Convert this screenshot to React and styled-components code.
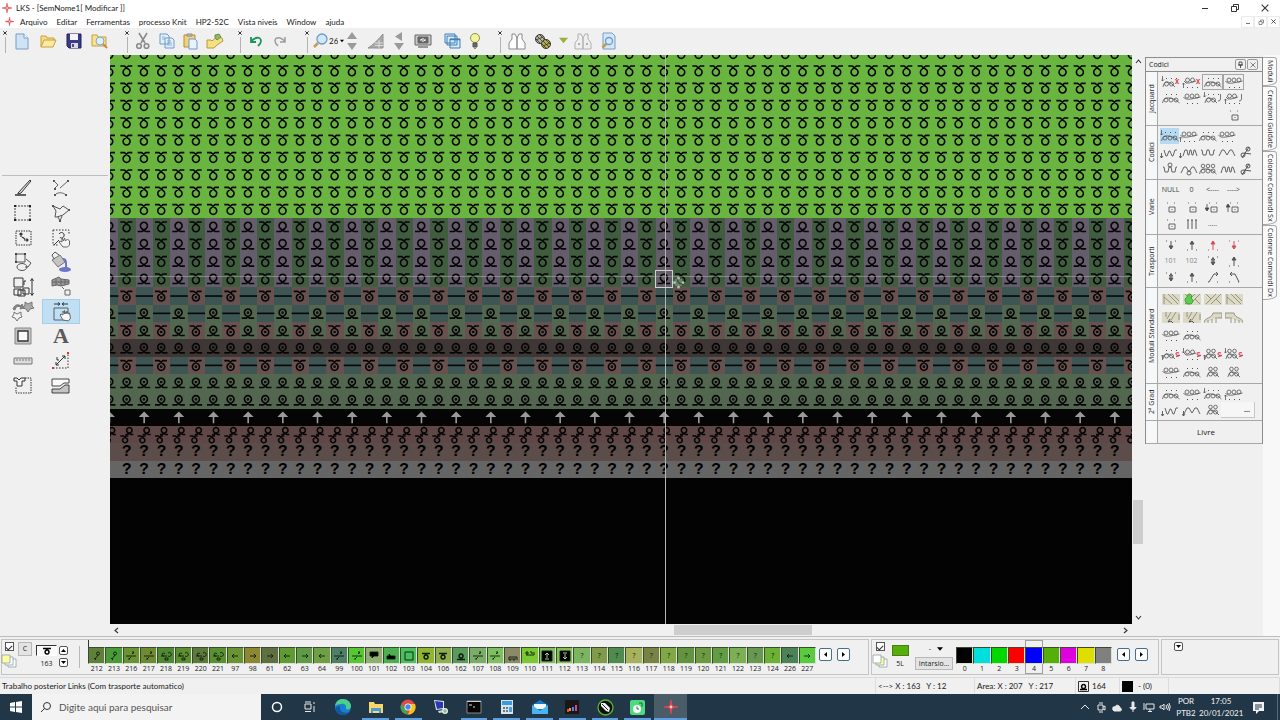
import styled, { createGlobalStyle } from 'styled-components';
import { useState } from 'react';

const GlobalStyle = createGlobalStyle`
  * { box-sizing: border-box; }
  body {
    margin: 0;
    background: #f0f0f0;
    color: #1a1a1a;
    font-family: Lato, "Open Sans", sans-serif;
    font-size: 8px;
    line-height: 10px;
  }
  button, input, select {
    font: inherit;
    color: inherit;
    margin: 0;
    padding: 0;
    border: 0;
    background: none;
  }
  svg { display: block; flex: none; }
`;

const Window = styled.div`
  min-height: 100vh;
  display: flex;
  flex-direction: column;
`;

/* ---------- title, menu, toolbar ---------- */

const TitleBar = styled.header`
  height: 15px;
  display: flex;
  align-items: center;
  gap: 4px;
  padding-left: 2px;
  background: white;
`;

const Title = styled.span`
  flex: 1;
`;

const WindowButtons = styled.div`
  display: flex;
  & button {
    width: 30px;
    height: 15px;
    display: grid;
    place-items: center;
  }
`;

const MenuBar = styled.nav`
  height: 13px;
  display: flex;
  align-items: center;
  background: white;
  padding-left: 5px;
  & > svg { margin-right: 6px; }
`;

const MenuItem = styled.a`
  color: inherit;
  text-decoration: none;
  margin-right: 9px;
`;

const ChildButtons = styled.div`
  display: flex;
  margin-left: auto;
  & button {
    width: 13px;
    height: 12px;
    border: 1px solid #ececec;
    display: grid;
    place-items: center;
  }
`;

const ToolBar = styled.div`
  height: 27px;
  display: flex;
  padding: 0 0 2px 1px;
`;

const ToolGroup = styled.div`
  width: ${({ $w }) => $w}px;
  display: flex;
  align-items: center;
`;

const Handle = styled.div`
  align-self: flex-end;
  width: 8px;
  height: 22px;
  display: flex;
  flex-direction: column;
  align-items: center;
  gap: 2px;
  &::after {
    content: '';
    flex: 1;
    width: 1px;
    background: #b4b4b4;
  }
`;

const ToolButton = styled.button`
  width: ${({ $w }) => $w}px;
  height: 24px;
  display: grid;
  place-items: center;
`;

const Picker = styled.label`
  display: flex;
  align-items: center;
  gap: 2px;
  & select {
    appearance: none;
    width: 9px;
    text-align: center;
  }
`;

/* ---------- workspace ---------- */

const Workspace = styled.main`
  flex: 1;
  display: grid;
  grid-template-columns: 110px minmax(0, 1fr) 119px 17px;
`;

const SideBar = styled.aside`
  padding: 120px 2px 0;
`;

const ToolPalette = styled.div`
  height: 223px;
  border-top: 1px solid #bdbdbd;
  padding-left: 2px;
  display: grid;
  grid-template-columns: 38px 38px;
  grid-template-rows: repeat(9, 1fr);
`;

const PaletteTool = styled.button`
  display: grid;
  place-items: center;
  background: ${({ $active }) => ($active ? '#c0dff2' : 'none')};
  ${({ $active }) => $active && 'border: 1px solid #a3cfea;'}
`;

const DrawingArea = styled.section`
  display: grid;
  grid-template-columns: minmax(0, 1fr) 12px;
  grid-template-rows: minmax(0, 1fr) 12px;
`;

const Chart = styled.svg`
  width: 100%;
  height: 100%;
  background: #030303;
`;

const ChartText = styled.g`
  font-family: "Liberation Mono", monospace;
  font-size: 16px;
  font-weight: bold;
  text-anchor: middle;
`;

const ScrollBar = styled.div`
  display: flex;
  flex-direction: ${({ $vertical }) => ($vertical ? 'column' : 'row')};
  align-items: center;
  justify-content: space-between;
  padding: ${({ $vertical }) => ($vertical ? '3px 0' : '0 3px')};
`;

const ScrollTrack = styled.div`
  flex: 1;
  align-self: stretch;
  display: grid;
  grid-template: ${({ $vertical }) =>
    $vertical ? '792fr 81fr 127fr / 1fr' : '1fr / 552fr 138fr 309fr'};
  &::after {
    content: '';
    background: #cdcdcd;
    ${({ $vertical }) => ($vertical ? 'grid-row: 2; margin: 0 1px;' : 'grid-column: 2; margin: 1px 0;')}
  }
`;

/* ---------- code panel on the right ---------- */

const Panel = styled.aside`
  align-self: start;
  margin: 2px 0 0 1px;
  border: 1px solid #8c8c8c;
  border-width: 1px 1px 0;
  font-family: "Open Sans", "Noto Sans", sans-serif;
  font-size: 7px;
`;

const PanelTitle = styled.div`
  height: 14px;
  display: flex;
  align-items: center;
  gap: 1px;
  padding: 0 4px 0 3px;
  border-bottom: 1px solid #8c8c8c;
  & span { flex: 1; }
  & button {
    width: 11px;
    height: 11px;
    border: 1px solid #9a9a9a;
    border-radius: 2px;
    display: grid;
    place-items: center;
  }
`;

const Section = styled.section`
  display: grid;
  grid-template-columns: 12px 1fr;
  height: ${({ $h }) => $h}px;
  border-bottom: 1px solid #a8a8a8;
`;

const SectionLabel = styled.h2`
  margin: 0;
  font-size: 7px;
  line-height: 11px;
  font-weight: normal;
  writing-mode: vertical-rl;
  transform: rotate(180deg);
  text-align: center;
  white-space: nowrap;
  border-left: 1px solid #a8a8a8;
  background: #f5f7f9;
`;

const CodeGrid = styled.div`
  display: grid;
  grid-template-columns: repeat(${({ $cols }) => $cols}, ${({ $cols }) => ($cols === 5 ? 19 : 21)}px);
  grid-auto-rows: 1fr;
  padding: 2px;
`;

const Code = styled.button`
  display: grid;
  place-items: center;
  color: ${({ $dim }) => ($dim ? '#8a8a8a' : '#444')};
  white-space: nowrap;
  overflow: hidden;
  background: ${({ $active }) => ($active ? '#b5daf2' : 'none')};
  ${({ $framed }) => $framed && 'border: 1px solid #a5a5a5;'}
`;

const MoreButton = styled.button`
  margin-left: -2px;
  width: 34px;
  border: 1px solid #c6c6c6;
  border-width: 0 1px 1px 0;
  background: #f6f6f6;
  text-align: right;
  padding-right: 4px;
  font-weight: bold;
`;

const Free = styled.button`
  font-size: 8px;
  padding-right: 8px;
`;

const Tabs = styled.div`
  display: flex;
  flex-direction: column;
  padding-top: 2px;
  background: #f8f8f8;
  font-family: "Open Sans", "Noto Sans", sans-serif;
  font-size: 7px;
`;

const Tab = styled.button`
  width: 14px;
  height: ${({ $h }) => $h}px;
  writing-mode: vertical-rl;
  line-height: 12px;
  white-space: nowrap;
  background: #fbfbfb;
  border: 1px solid #a8a8a8;
  border-left: 0;
  border-radius: 0 3px 12px 0 / 0 3px 5px 0;
`;

/* ---------- bottom bars ---------- */

const BottomBar = styled.div`
  height: 41px;
  display: flex;
  gap: 2px;
  padding: 2px 1px;
  border-top: 1px solid #bcbcbc;
  font-family: "Open Sans", "Noto Sans", sans-serif;
  font-size: 7px;
`;

const Box = styled.div`
  flex: ${({ $w }) => ($w ? `0 0 ${$w}px` : 1)};
  display: flex;
  gap: ${({ $gap }) => $gap || 0}px;
  padding-left: 2px;
  border: 1px solid #c4c4c4;
`;

const Column = styled.div`
  width: ${({ $w }) => $w}px;
  display: flex;
  flex-direction: column;
  align-items: center;
  gap: 3px;
  padding-top: ${({ $top }) => $top || 2}px;
`;

const Check = styled.input`
  appearance: none;
  width: 9px;
  height: 9px;
  border: 1px solid #555;
  background: white;
  display: grid;
  place-items: center;
  &:checked::after {
    content: '';
    width: 5px;
    height: 3px;
    border: solid #333;
    border-width: 0 0 1px 1px;
    transform: rotate(-45deg);
  }
`;

const FlatButton = styled.button`
  min-width: 14px;
  height: ${({ $h }) => $h}px;
  padding: 0 3px;
  border: 1px solid #b8b8b8;
  background: #e3e3e3;
  white-space: nowrap;
`;

const CurrentCode = styled.div`
  width: 21px;
  height: 11px;
  border: 1px solid #888;
  border-color: #333 white white #333;
  background: #fafafa;
  display: grid;
  place-items: center;
`;

const CurrentColor = styled.div`
  width: 17px;
  height: 11px;
  border: 1px solid #4a7a20;
  background: #55ae0a;
`;

const ArrowButton = styled.button`
  width: ${({ $s }) => $s}px;
  height: ${({ $s }) => $s}px;
  border: 1px solid ${({ $s }) => ($s > 10 ? '#47708c' : '#555')};
  border-radius: 2px;
  background: white;
  display: grid;
  place-items: center;
`;

const Arrows = styled.div`
  display: flex;
  gap: 5px;
  padding: 8px 0 0 3px;
`;

const Separator = styled.div`
  width: 1px;
  margin: 6px 8px 6px 9px;
  background: #b8b8b8;
`;

const SwatchRow = styled.div`
  width: ${({ $w }) => $w}px;
  display: grid;
  grid-template-columns: repeat(${({ $n }) => $n}, 1fr);
  ${({ $tick }) => $tick && `
    background: linear-gradient(#333, #333) 0 0 / 1px 8px no-repeat;
  `}
`;

const Swatch = styled.button`
  display: flex;
  flex-direction: column;
  align-items: center;
  padding-top: 7px;
  line-height: 9px;
  height: 34px;
  ${({ $active }) => $active && 'box-shadow: inset 0 0 0 1px #a0a0a0;'}
`;

const SwatchColor = styled.span`
  width: 100%;
  height: 17px;
  border: 1px solid;
  border-color: #3a4a30 #d9e3d0 #d9e3d0 #3a4a30;
  background: ${({ $color }) => $color};
  color: #101810;
  display: grid;
  place-items: center;
`;

const StatusBar = styled.footer`
  height: 17px;
  display: flex;
  border-top: 1px solid #dadada;
`;

const StatusField = styled.div`
  ${({ $w }) => ($w ? `width: ${$w}px;` : 'flex: 1;')}
  display: flex;
  align-items: center;
  gap: 3px;
  padding-left: 2px;
  border-right: 1px solid #dcdcdc;
  white-space: pre;
`;

const BlackSquare = styled.span`
  width: 11px;
  height: 11px;
  background: #000;
`;

const TaskBar = styled.div`
  height: 26px;
  display: flex;
  background: #213646;
  color: #f2f2f2;
`;

const StartButton = styled.button`
  width: 32px;
  display: grid;
  place-items: center;
`;

const Search = styled.label`
  width: 229px;
  display: flex;
  align-items: center;
  gap: 7px;
  padding-left: 8px;
  background: #f3f3f3;
  color: #333;
  font-size: 10px;
  & input {
    flex: 1;
    min-width: 0;
    outline: none;
  }
  & input::placeholder { color: #555; }
`;

const Apps = styled.div`
  width: 426px;
  display: grid;
  grid-template-columns: repeat(13, 1fr);
`;

const AppButton = styled.button`
  display: grid;
  place-items: center;
  background: ${({ $active }) => ($active ? '#4b5c69' : 'none')};
  ${({ $open, $active }) => $open && `
    box-shadow: inset 0 -2px #5f9fe0;
    margin: 0 ${$active ? 0 : 3}px;
  `}
`;

const Tray = styled.div`
  margin-left: auto;
  display: flex;
  align-items: center;
`;

const TrayButton = styled.button`
  width: ${({ $w }) => $w || 16}px;
  display: grid;
  place-items: center;
`;

const TrayText = styled.div`
  width: ${({ $w }) => $w}px;
  text-align: center;
  line-height: 12px;
`;

const ShowDesktop = styled.div`
  width: 3px;
  align-self: stretch;
  margin-left: 4px;
  border-left: 1px solid #5a6974;
`;

/* ---------- icons ---------- */

function Icon({ s = 20, h, box, children, ...rest }) {
  const height = h || s;
  return (
    <svg width={s} height={height} viewBox={box || `0 0 ${s} ${height}`} fill="none" stroke="#333" aria-hidden="true" {...rest}>
      {children}
    </svg>
  );
}

const Star = ({ s = 10, color = '#d84a4a' }) => (
  <Icon s={s} box="0 0 10 10" stroke="none" fill={color}>
    <path d="M5 0 5.8 4.2 10 5 5.8 5.8 5 10 4.2 5.8 0 5 4.2 4.2Z" stroke={color} strokeWidth=".5" />
    <circle cx="5" cy="5" r="1" fill="#f6c9c9" />
  </Icon>
);

const Triangle = ({ dir = 'down', s = 5, color = '#000' }) => {
  const d = { down: 'M0 1h5L2.5 4z', up: 'M0 4h5L2.5 1z', left: 'M4 0v5L1 2.5z', right: 'M1 0v5L4 2.5z' };
  return <Icon s={s} box="0 0 5 5" stroke="none" fill={color}><path d={d[dir]} /></Icon>;
};

const Chevron = ({ dir }) => {
  const d = { up: 'M1 5l2.5-3 2.5 3', down: 'M1 2l2.5 3 2.5-3', left: 'M5 1L2 3.5l3 2.5', right: 'M2 1l3 2.5L2 6' };
  return <Icon s={7} strokeWidth="1.1"><path d={d[dir]} /></Icon>;
};

const Vest = ({ dots, color }) => (
  <Icon s={18} stroke={color} fill={dots ? '#efefef' : '#fdfdfd'}>
    <path d="M4 2h3l2 4v11H1v-6l3-4zM14 2h-3L9 6v11h8v-6l-3-4z" />
    {dots && <path d="M4 12h2M12 12h2" strokeWidth="2" />}
  </Icon>
);

const Lens = ({ x = 8, y = 7, r = 4 }) => (
  <>
    <path d={`M${x - r + 1} ${y + r - 1}l-4 4`} stroke="#c79a52" strokeWidth="2.5" />
    <circle cx={x} cy={y} r={r} fill="#cfe9fb" stroke="#6d9cc4" strokeWidth="1.3" />
  </>
);

const icons = {
  new: <Icon s={18} stroke="#7d9cc0"><path d="M3 2h8l4 4v11H3z" fill="#cfe3f7" /><path d="M11 2v4h4" fill="#fff" /></Icon>,
  open: <Icon s={18} stroke="#c8a03c"><path d="M2 15V4h5l1 2h7v3" fill="#f5dc85" /><path d="M2 15l3-7h12l-3 7z" fill="#fbeaa0" /></Icon>,
  save: <Icon s={18} stroke="#20205a"><path d="M2 2h14v14H4l-2-2z" fill="#3a3a86" /><path d="M5 2h8v6H5z" fill="#f4f4fa" stroke="none" /><path d="M6 11h7v5H6z" fill="#d8d8e6" stroke="none" /><path d="M8 12v3" strokeWidth="1.5" /></Icon>,
  find: <Icon s={18} stroke="#c8a03c"><path d="M1 14V3h5l1 2h8v9z" fill="#f8e290" /><circle cx="9" cy="9" r="4" fill="#dcf0fb" stroke="#86a8c0" /><path d="M12 12l4 4" stroke="#c78a42" strokeWidth="2" /></Icon>,
  cut: <Icon s={18} stroke="#8a8a8a" strokeWidth="1.6"><path d="M5 1l6 10M13 1L7 11" /><circle cx="5" cy="14" r="2.3" /><circle cx="12.5" cy="14" r="2.3" /></Icon>,
  copy: <Icon s={18} stroke="#6f9bc8" fill="#e2effb"><path d="M2 2h7l2 2v8H2zM7 6h7l2 2v8H7z" /><path d="M9 9h4M9 11h5M9 13h5M4 5h3M4 7h3" strokeWidth=".7" /></Icon>,
  paste: <Icon s={18} stroke="#b08f3c"><path d="M2 3h11v12H2z" fill="#efd27a" /><path d="M5 2h5v2H5z" fill="#ccc" stroke="#888" /><path d="M7 7h6l2 2v8H7z" fill="#e8f2fc" stroke="#6f9bc8" /></Icon>,
  brush: <Icon s={18} stroke="#b99a35"><path d="M1 16V8h4l1 1 5-4 5 1 1 3-6 4-3 3z" fill="#f3df86" /><path d="M9 3l4-1 2 3-4 3-2-2z" fill="#8fb86a" stroke="#6b8f4a" /></Icon>,
  undo: <Icon s={16} stroke="#1f9462" strokeWidth="1.8"><path d="M3 4v5h5M3 9C6 4 13 3 13 8c0 2-2 4-3 5" /></Icon>,
  redo: <Icon s={16} stroke="#9c9c9c" strokeWidth="1.5"><path d="M13 4v5H8M13 9C10 4 3 3 3 8c0 2 2 4 3 5" /></Icon>,
  zoom: <Icon s={18}><Lens x={11} y={7} r={5} /></Icon>,
  updown: <Icon s={14} h={20} stroke="none" fill="#9a9a9a"><path d="M7 1l5 7H2zM7 19l5-7H2z" /></Icon>,
  slope: <Icon s={18} stroke="#8f8f8f"><path d="M1 16C6 13 11 8 16 2v14z" fill="#a9a9a9" /><path d="M12 8v8M8 11h8M8 13.5h8" stroke="#eee" strokeWidth=".7" /></Icon>,
  steps: <Icon s={14} h={20} stroke="none" fill="#9a9a9a"><path d="M10 1v9L3 5.500zM7 19l5-7H2z" /></Icon>,
  monitor: <Icon s={18} stroke="#666"><path d="M1 3h16v10H1z" fill="#c8c8c8" /><path d="M4 5h10v6H4z" fill="#666" /><path d="M6 8h2l-1-1M12 8h-2l1 1M9 6v4" stroke="#fff" /><path d="M4 15h10" strokeWidth="2" stroke="#999" /></Icon>,
  windows: <Icon s={18} stroke="#3f7fb5" fill="#d8ebfa"><path d="M1 2h10v9H1zM3 4h10v9H3zM6 7h10v9H6z" /><path d="M6 7.5h10" strokeWidth="1.5" /></Icon>,
  bulb: <Icon s={18} stroke="#8f8f50"><circle cx="9" cy="6" r="4.500" fill="#f3f59a" /><path d="M7 11h4v4H7z" fill="#666" stroke="#555" /><path d="M8 16.5h2" /></Icon>,
  yarn: <Icon s={18} stroke="#333"><circle cx="6" cy="7" r="4.5" fill="#b8b8a0" /><circle cx="12" cy="12" r="4.5" fill="#b6b04a" /><path d="M3 4l6 6M2 7l4 4M6 3l4 4M9 9l6 6M8 12l4 4M12 8l4 4M2 8l7-3M9 14l7-3" strokeWidth=".8" /></Icon>,
  preview: <Icon s={18} stroke="#7d9cc0"><path d="M3 1h9l3 3v13H3z" fill="#d4e6f8" /><Lens x={9} y={9} r={3.5} /></Icon>,

  pencil: <Icon><path d="M2 17h11" strokeWidth="1.5" /><path d="M5 15L17 2l1 1L8 15l-3 1z" fill="#ddd" /></Icon>,
  lines: <Icon stroke="#666"><path d="M3 3l4 4-4 4M9 10l8-7M4 17c2-3 8-3 11 0" /><path d="M2 2h2v2H2zM16 2h2v2h-2zM3 10h2v2H3zM3 16h2v2H3zM14 16h2v2h-2z" fill="#555" stroke="none" /></Icon>,
  select: <Icon><path d="M2 3h15v14H2z" strokeDasharray="2 1" stroke="#444" /><path d="M1 2h2v2H1zM16 2h2v2h-2zM1 16h2v2H1zM16 16h2v2h-2z" fill="#222" stroke="none" /></Icon>,
  lasso: <Icon stroke="#555"><path d="M2 3l7 3 3-3 6 4-6 5-6 2H4l1-6zM7 14l2 4 2-5" /><path d="M1 2h2v2H1zM17 6h2v2h-2zM8 17h2v2H8z" fill="#555" stroke="none" /></Icon>,
  moveBox: <Icon><path d="M3 3h15v14H3z" strokeDasharray="1.5 1" /><path d="M8 9V5M6.500 6.500L8 5l1.500 1.500M11 12h4M13.500 10.500L15 12l-1.500 1.500M9 9l3 2" strokeWidth="1.2" /></Icon>,
  rotate: <Icon><path d="M2 2h16v5M2 2v14M2 17h6" strokeDasharray="1.5 1.5" /><path d="M8 6c2-3 6-1 5 2s-4 2-4 1M3 17l5-5" /><path d="M12 19l-4-5 1-1 2 1v-4l1.500 3 1-3 1 3 2-2 2 2v4l-2 2z" fill="#f4f4f4" stroke="#666" /></Icon>,
  shapes: <Icon stroke="#555"><path d="M3 2h9v8H3z" /><ellipse cx="9" cy="15" rx="5" ry="3.5" fill="#f0f0f0" /><path d="M13 7l5 4-3 4h-3" /><path d="M2 1h2v2H2zM11 1h2v2h-2zM2 9h2v2H2z" fill="#444" stroke="none" /></Icon>,
  bucket: <Icon s={22}><path d="M2 9l8-5 5 7-7 5z" fill="#c4c4c4" stroke="#777" /><path d="M4 8L2 4l3-3 4 3" stroke="#555" /><path d="M13 8c4 0 3 6 3 9h2" fill="none" stroke="#6a72c4" strokeWidth="2" /><ellipse cx="15" cy="18.5" rx="6" ry="2.5" fill="#6e76c8" stroke="none" /></Icon>,
  arrange: <Icon s={22}><path d="M2 2h9v9H2zM2 13h7v6H2zM6 14h7v6H6zM11 12h6v6h-6zM12 9V5h2" /><path d="M20 3v16M18.5 5L20 2.500 21.5 5M18.5 17l1.500 2.5 1.500-2.5" /></Icon>,
  blocks: <Icon s={22} stroke="#666"><path d="M2 4l7-3 2 2 8 1v4l-8 2-4-1-5 1z" fill="#999" /><path d="M6 3v6M11 3v7M15 4v5M2 6h17" /><path d="M15 14h5v5h-5zM12 11l2 2" /></Icon>,
  stars: <Icon s={24} stroke="#777"><path d="M14 2l3 2 4-2v4l2 2-4 1-2 3-2-3-3-1 2-3z" fill="#aaa" /><path d="M3 12l3 2 4-2v3l1 2-3 1-2 3-2-3-3-1 2-3z" fill="#f2f2f2" /><path d="M2 9c2-5 5-5 8-3l1-2 2 4-4 1 1-2C7 6 5 6 4 10z" fill="#888" /></Icon>,
  hand: <Icon s={20}><path d="M3 6h14v12H3z" stroke="#55606a" /><path d="M3 2h6M11 2h6M7 .500L9 2 7 3.500M13 .500L11 2l2 1.500" /><path d="M12 18l-3-5 1-1 2 1V9l1.500 3V8.500L15 12l1-3 1 3 1.500-1 1 5-2 3z" fill="#f8f8f8" stroke="#666" /></Icon>,
  frame: <Icon s={20}><path d="M2 2h16v16H2z" fill="#c4c4c4" stroke="#888" /><path d="M5 5h10v10H5z" fill="#f8f8f8" strokeWidth="1.3" /></Icon>,
  ruler: <Icon s={20} stroke="#777"><path d="M1 7h18v6H1z" fill="#ddd" /><path d="M4 8v2M7 8v2M10 8v2M13 8v2M16 8v2" /></Icon>,
  measure: <Icon s={20}><path d="M2 17h15V3" strokeDasharray="1.5 1.5" /><path d="M5 14l9-9M5 11v3h3M11 5h3v3M6 6v3h2" /><path d="M1 16h2v2H1zM16 1h2v2h-2z" fill="#d33" stroke="none" /></Icon>,
  shirt: <Icon s={20}><path d="M1 2h3l2 2 2-2h4v3H9v5H4V5H1z" fill="#f8f8f8" /><path d="M12 2h6v15H3v-6" strokeDasharray="1.5 1" /></Icon>,
  layers: <Icon s={20} strokeWidth=".9"><path d="M1 3h17v4h-5l-4 3H1z" fill="#fafafa" /><path d="M18 9v8H1v-4h8l5-4z" fill="#c4c4c4" /></Icon>,
};

const LetterIcon = styled.span`
  font: bold 22px/22px "Liberation Serif", serif;
  color: #5a5a5a;
`;

/* ---------- knitting chart ---------- */

const PITCH = 17.333;
const LEFT = -9;
const CHART_COLS = 60;
const FIRST_ROW = 163;

const GREEN = '#6ab540';
const PURPLE = '#665d6c';
const DARK_GREEN = '#405d40';
const RED = '#685250';
const TEAL = '#3d5654';
const SAGE = '#53664f';

// each row: [even colour, even stitch, odd colour, odd stitch]
const stripes = [
  ...Array(4).fill([PURPLE, 'front', DARK_GREEN, 'back']),
  [TEAL, 'float', RED, 'backDot'],
  [SAGE, 'frontDot', TEAL, 'float'],
  [SAGE, 'frontDot', RED, 'backDot'],
  ['#3e3735', 'frontDot', '#3e3735', 'frontDot'],
  [TEAL, 'float', RED, 'backDot'],
  [SAGE, 'frontDot', SAGE, 'frontDot'],
  [SAGE, 'frontDot', SAGE, 'frontDot'],
  ['#050505', 'arrow', '#050505', null],
  ['#5f4747', 'double', '#5f4747', 'double'],
  ['#5c4c4a', 'text', '#5c4c4a', 'text'],
  ['#666565', 'text', '#666565', 'text'],
];

const rows = [
  ...Array.from({ length: 10 }, (_, i) => ({ y: FIRST_ROW - (10 - i) * PITCH, row: [GREEN, 'back', GREEN, 'back'] })),
  ...stripes.map((row, i) => ({ y: FIRST_ROW + i * PITCH, row })),
];

const BACK = 'M2 4H6L10.500 7.500A3.500 3.500 0 1 1 6 7.500L10 4H14';
const FRONT = 'M2 13.500H6.500L10.500 10.500A3.500 3.500 0 1 0 6 10.500L10 13.500H14.500';

const stitches = {
  back: <path d={BACK} />,
  backDot: <><path d={BACK} /><circle cx="8.25" cy="10" r=".5" /></>,
  front: <path d={FRONT} />,
  frontDot: <><path d={FRONT} /><circle cx="8.25" cy="8" r=".5" /></>,
  float: <path d="M0 8.7H17.4" />,
  arrow: <path d="M8.5 14.500V4M5 7.500L8.5 4L12 7.500z" stroke="#9a9a9a" fill="#9a9a9a" />,
  double: (
    <>
      <path d="M7 8.500H9L12.500 6.500A2.700 2.700 0 1 0 9.500 6.500L12.500 8.500H15" />
      <path d="M2 10H5L8.500 12.500A2.500 2.500 0 1 1 5 12.500L7.500 10H10" />
    </>
  ),
};

function KnitChart() {
  const cols = Array.from({ length: CHART_COLS }, (_, i) => i);
  return (
    <Chart role="img" aria-label="SemNome1">
      <defs>
        {Object.entries(stitches).map(([id, shape]) => (
          <g key={id} id={id} fill="none" stroke="#060606" strokeWidth="1.6">{shape}</g>
        ))}
      </defs>
      <g shapeRendering="crispEdges">
        {rows.map(({ y, row }, i) => (
          <g key={i}>
            <rect y={y} width="100%" height={PITCH} fill={row[0]} />
            {row[0] !== row[2] && cols.filter((c) => c % 2).map((c) => (
              <rect key={c} x={LEFT + c * PITCH} y={y} width={PITCH} height={PITCH} fill={row[2]} />
            ))}
          </g>
        ))}
      </g>
      {rows.map(({ y, row }, i) => cols.map((c) => {
        const stitch = row[c % 2 ? 3 : 1];
        return stitches[stitch] && <use key={`${i}-${c}`} href={`#${stitch}`} x={LEFT + c * PITCH} y={y} />;
      }))}
      <ChartText>
        {rows.filter(({ row }) => row[1] === 'text').map(({ y }) => cols.slice(1, -1).map((c) => (
          <text key={`${y}-${c}`} x={LEFT + 8.5 + c * PITCH} y={y + 13}>?</text>
        )))}
      </ChartText>
      <path d="M0 221.5H4000" stroke="#d0d0d0" strokeOpacity=".4" />
      <line x1="555.5" y1="0" x2="555.5" y2="100%" stroke="#b4b4b4" />
      <rect x="545.5" y="215.5" width="17" height="17" fill="none" stroke="#d0d0d0" />
      <g fill="#a9bba9">
        <circle cx="568.5" cy="223" r="1.5" /><circle cx="568.5" cy="232" r="1.5" />
        <circle cx="564.5" cy="227.5" r="1.5" /><circle cx="573" cy="227.5" r="1.5" />
        <path d="M565 224h7v7h-7z" fillOpacity=".4" />
      </g>
    </Chart>
  );
}

/* ---------- code buttons ---------- */

// a run of n loops, opening up or down, with an optional arrow and mark
function Loops({ n = 3, flip, arrow, mark, markColor = '#444', dots = true, twin }) {
  const start = (mark ? 8 : 10) - n * 2.5;
  const cy = flip ? 5 : 9;
  return (
    <Icon s={19} h={14} stroke="#555" strokeWidth=".8">
      {Array.from({ length: n }, (_, i) => (
        <g key={i}>
          <circle cx={start + 2.5 + i * 5} cy={cy} r="2" />
          {twin && <circle cx={start + 2.5 + i * 5} cy={cy === 5 ? 10 : 4} r="1.8" />}
        </g>
      ))}
      <path d={flip
        ? `M${start - 1} 6q1.5 3 ${n * 2.5} 2t${n * 2.5 + 2}-2`
        : `M${start - 1} 12q1-6 ${n * 2.5}-5t${n * 2.5 + 2} 5`} />
      {dots && !twin && <path d={flip ? 'M5 12.5h1M10 12.5h1M15 12.5h1' : 'M5 3.5h1M10 3.5h1M15 3.5h1'} strokeWidth="1" />}
      {arrow && <path d={arrow === 'down' ? 'M1.5 1v5M0 4.5L1.5 6 3 4.5' : 'M1.5 13V8M0 9.5L1.5 8 3 9.5'} />}
      {mark === 'x' && <path d="M14 4l4 5M18 4l-4 5M16 4v5" stroke="#d33" />}
      {mark === 'j' && <path d="M17.500 3v5q0 2-2.5 2" />}
      {mark === 's' && <path d="M18 6q-3-1-3 .7t3 1.5-3 1.5" stroke={markColor} strokeWidth="1.1" />}
    </Icon>
  );
}

const Waves = ({ flip, n = 3, arrow, loops }) => (
  <Icon s={19} h={14} stroke="#555" strokeWidth=".9">
    <path d={n === 2
      ? (flip ? 'M2 11L5 5h2l3 5 3-5h2l3 6' : 'M3 5h1l1 5h3l1-5h2l1 5h3l1-5h1')
      : (flip ? 'M4 11l2-6h2l1 5h1l1-5h1l1 5h1l1-5h1l2 6' : 'M4 5l2 6h1l2-5h1l2 5h1l2-6h2')} />
    {loops && <path d={flip ? 'M8 11a2 2 0 1 0 4 0 2 2 0 1 0-4 0' : 'M8 3a2 2 0 1 0 4 0 2 2 0 1 0-4 0'} />}
    {arrow && <path d="M1.5 13V8M0 11l1.5 2L3 11" />}
  </Icon>
);

const Needle = () => (
  <Icon s={12} h={14} stroke="#555"><circle cx="3" cy="10" r="2" /><circle cx="8" cy="4" r="2" /><path d="M2 13L9 2M4 8l7 1" /></Icon>
);

const Cell = ({ arrow }) => (
  <Icon s={16} h={14} stroke="#555" strokeWidth=".9">
    <path d="M6 7h6v5H6zM8.5 9.5h1" /><path d="M4 3h1M11 3h1" />
    {arrow === 'down' && <path d="M2 4v6M0 8l2 3 2-3z" fill="#333" />}
    {arrow === 'up' && <path d="M2 12V5M0 7l2-3 2 3z" fill="#333" />}
  </Icon>
);

const Transfer = ({ dir, color = '#555', kind }) => (
  <Icon s={14} h={14} stroke={color} strokeWidth="1">
    {kind === 'bend'
      ? <path d={dir === 'right' ? 'M3 12l5-8h4M10 2l2 2-2 2' : 'M12 12L8 4H3M5 2L3 4l2 2'} />
      : <path d={dir === 'down' ? 'M7 3v8M5 8l2 3 2-3z' : 'M7 12V4M5 6l2-3 2 3z'} fill={color} />}
    {kind === 'both' && <path d="M5 6l2-2 2 2z" />}
    <path d={dir === 'down' ? 'M2 3h1M11 3h1' : 'M2 12h1M11 12h1'} />
  </Icon>
);

const Module = ({ kind, fish, foot }) => (
  <Icon s={18} h={13} stroke="#8f8c78" strokeWidth=".9">
    {kind < 3 && <path d="M0 1h18v11H0z" fill="#dcd9c5" stroke="none" />}
    {kind === 0 && <path d="M2 1v10M6 1l10 10M10 1l7 7M2 4l8 7" />}
    {kind === 1 && <path d="M2 11L12 1M7 11L17 1M2 1l5 5M12 6l5 5" />}
    {kind === 2 && <path d="M4 1v5M9 1L5 8M14 1l-5 8M17 3v6" />}
    {kind === 3 && <path d="M0 12c0-6 8-4 9-10h9v5h-5M4 12V9M8 12V8M12 12V6" fill="#dcd9c5" />}
    {kind === 4 && <path d="M18 12c0-6-8-4-9-10H0v5h5M14 12V9M10 12V8M6 12V6" fill="#dcd9c5" />}
    {fish && <path d="M4 11q-4-5 0-7 1-4 3-3 3 1 1 4 4 3 0 6z" fill="#5ccc4c" stroke="#3a9a30" />}
    {foot && <path d="M8 8l-2 3 3-1 2 2" stroke="#444" />}
  </Icon>
);

const jacquard = [
  { el: <Loops n={2} arrow="down" mark="x" /> }, { el: <Loops n={2} flip arrow="up" mark="x" /> },
  { el: <Loops />, framed: true }, { el: <Loops flip />, framed: true },
  { el: <Loops /> }, { el: <Loops flip /> }, { el: <Loops n={2} arrow="down" mark="j" /> }, { el: <Loops n={2} flip arrow="up" mark="j" /> },
  {}, {}, {}, { el: <Cell /> },
];

const codici = [
  { el: <Loops arrow="down" />, active: true }, { el: <Loops flip arrow="up" /> }, { el: <Loops /> }, { el: <Loops flip /> }, {},
  { el: <Waves arrow /> }, { el: <Waves flip arrow /> }, { el: <Waves n={2} /> }, { el: <Waves n={2} flip /> }, { el: <Needle /> },
  { el: <Waves n={2} loops /> }, { el: <Waves n={2} flip loops /> }, { el: <Loops twin /> }, { el: <Waves flip /> }, { el: <Needle /> },
];

const varie = [
  { el: 'NULL' }, { el: '0' }, { el: '<----' }, { el: '---->' },
  { el: <Cell /> }, { el: <Cell /> }, { el: <Cell arrow="down" /> }, { el: <Cell arrow="up" /> },
  { el: <Cell /> }, { el: <Icon s={12} h={12}><path d="M2 11V2M6 11V2M10 11V2M1 2h2M5 2h2M9 2h2" strokeWidth=".8" /></Icon> }, { el: '.....' }, {},
];

const trasporti = [
  { el: <Transfer dir="down" /> }, { el: <Transfer dir="up" /> }, { el: <Transfer dir="up" color="#d45050" /> }, { el: <Transfer dir="down" color="#d45050" /> },
  { el: '101', dim: true }, { el: '102', dim: true }, { el: <Transfer dir="down" kind="both" /> }, { el: <Transfer dir="up" /> },
  { el: <Transfer dir="down" kind="both" /> }, { el: <Transfer dir="up" /> }, { el: <Transfer kind="bend" dir="right" /> }, { el: <Transfer kind="bend" dir="left" /> },
];

const moduli = [
  { el: <Module kind={0} /> }, { el: <Module kind={1} fish /> }, { el: <Module kind={1} /> }, { el: <Module kind={0} /> },
  { el: <Module kind={2} foot /> }, { el: <Module kind={2} foot /> }, { el: <Module kind={3} /> }, { el: <Module kind={4} /> },
  { el: <Loops flip /> }, { el: <Loops /> }, {}, {},
  { el: <Loops n={2} arrow="up" mark="s" markColor="#d3455a" /> }, { el: <Loops n={2} flip arrow="down" mark="s" markColor="#d3455a" /> },
  { el: <Loops n={2} twin arrow="up" mark="s" markColor="#d3455a" /> }, { el: <Loops n={2} twin arrow="down" mark="s" markColor="#d3455a" /> },
  { el: <Loops flip /> }, { el: <Loops /> }, { el: <Loops n={2} twin /> }, { el: <Loops n={2} twin /> },
];

const grad = [
  { el: <Loops /> }, { el: <Loops flip /> }, { el: <Loops arrow="down" /> }, { el: <Loops flip arrow="up" /> },
  { el: <Waves arrow /> }, { el: <Waves flip arrow n={2} /> }, { el: <Loops n={2} twin /> },
];

const sections = [
  { label: 'Jacquard', h: 54, codes: jacquard },
  { label: 'Codici', h: 54, cols: 5, codes: codici },
  { label: 'Varie', h: 55, codes: varie },
  { label: 'Trasporti', h: 53, codes: trasporti },
  { label: 'Moduli Standard', h: 96, codes: moduli },
  { label: '2ª Grad', h: 37, codes: grad, more: true },
];

/* ---------- palettes ---------- */

const codeSwatches = [
  [212, '#5f8038', 'pin'], [213, '#4a9a3a', 'pin'], [216, '#6a9433', 'split'], [217, '#6e8a33', 'split'],
  [218, '#4f8a33', 'pair'], [219, '#5b8f2f', 'pair'], [220, '#5d7a3c', 'pair'], [221, '#5a9130', 'pair'],
  [97, '#6a9433', 'left'], [98, '#8c8730', 'right'], [61, '#5e7042', 'right'], [62, '#5f9a33', 'left'],
  [63, '#5f9a45', 'right'], [64, '#6f9f45', 'left'], [99, '#4f7f66', 'split'], [100, '#56c832', 'split'],
  [101, '#8fae70', 'blockDown'], [102, '#4cb050', 'blockUp'], [103, '#4cc060', 'square'], [104, '#8fb532', 'back'],
  [106, '#8fae4c', 'back'], [162, '#5a9a5c', 'front'], [107, '#7aae68', 'split'], [108, '#7fc060', 'split'],
  [109, '#8b8a66', 'low'], [110, '#7ac832', 'high'], [111, '#7fbf62', 'boxUp'], [112, '#84c054', 'boxDown'],
  [113, '#7cb560', '?'], [114, '#7f9a48', '?'], [115, '#4f8a50', '?'], [116, '#a8b25c', '?'],
  [117, '#788245', '?'], [118, '#82a845', '?'], [119, '#629440', '?'], [120, '#6c9a40', '?'],
  [121, '#629c44', '?'], [122, '#7cb055', '?'], [123, '#669850', '?'], [124, '#6cb034', '?'],
  [226, '#4c8258', 'left'], [227, '#58cc3c', 'right'],
];

const glyphs = {
  pin: <path d="M5 10l3-4M8 6a1.500 1.500 0 1 0 0-3 1.500 1.500 0 0 0 0 3M4 9l2 2" />,
  split: <path d="M2 7h10M8 5l2-2M9 2v3M5 10l2-2M5 9v2" />,
  pair: <path d="M2 7h6M5 7a1.500 1.500 0 1 1 1-2M9 7a2 2 0 1 0 0-3M6 9h3v2H6z" />,
  left: <path d="M4 7h6M6 5L4 7l2 2" />,
  right: <path d="M4 7h6M8 5l2 2-2 2" />,
  blockDown: <path d="M3 3h8v4H7L5 9V7H3z" fill="#000" />,
  blockUp: <path d="M3 10h8V7H7L5 5v2H3z" fill="#000" />,
  square: <path d="M3 3h8v8H3z" />,
  back: <path d="M3 4.500h8M7 6a2 2 0 1 0 .1 0" strokeWidth="1.5" />,
  front: <path d="M3 10.500h8M7 5a2 2 0 1 0 .1 0" strokeWidth="1.5" />,
  low: <path d="M3 8h8M3 8v3h2V9M7 9v2h2V9M11 8v3" />,
  high: <path d="M3 6h8M3 3h2v2H3zM7 3h2v2M11 3v3" />,
  boxUp: <><path d="M2 2h10v10H2z" fill="#000" /><path d="M7 9V4M5 6l2-2 2 2M5 10h4" stroke="#b8e0a0" /></>,
  boxDown: <><path d="M2 2h10v10H2z" fill="#000" /><path d="M7 5v5M5 8l2 2 2-2M5 4h4" stroke="#b8e0a0" /></>,
};

const colors = ['#000', '#00dede', '#00d800', '#ff0000', '#0000ff', '#55ae0a', '#de00de', '#dede00', '#808080'];

const PageStack = ({ first = '#ffffa0', second = '#fff' }) => (
  <Icon s={16} h={14} stroke="#8aa0a8" strokeWidth=".8">
    <path d="M7 5h8v8H7z" fill="#fff" /><path d="M4 3h8v8H4z" fill={second} /><path d="M1 1h8v8H1z" fill={first} />
  </Icon>
);

/* ---------- task bar ---------- */

const apps = [
  { name: 'Cortana', el: <Icon s={12} stroke="#fff" strokeWidth="1.5"><circle cx="6" cy="6" r="4.5" /></Icon> },
  { name: 'Task view', el: <Icon s={12} stroke="#e8e8e8"><path d="M1 3h6v5H1zM1 1h6M1 10.500h6M10 1v2M10 5v6" /></Icon> },
  { name: 'Edge', el: <Icon s={18} stroke="none"><circle cx="9" cy="9" r="8" fill="#1b7fd0" /><path d="M1 8C2 2 6 1 9 1c5 0 8 4 8 7s-3 4-5 3c1-4-2-6-5-5-3 0-5 1-6 2z" fill="#4bd08a" /><path d="M6 8c-1 5 3 8 9 6-3 4-9 4-12 0S3 8 6 8z" fill="#0c59a4" /></Icon> },
  { name: 'Explorer', open: true, el: <Icon s={16} stroke="none"><path d="M1 3h5l1 2h8v9H1z" fill="#f9d56a" /><path d="M3 9h10v5h-2v-2H5v2H3z" fill="#4a9bdc" /></Icon> },
  { name: 'Chrome', open: true, el: <Icon s={16} stroke="none"><circle cx="8" cy="8" r="7.5" fill="#e04a3f" /><path d="M1.500 4.500L6 11l2 4.500A7.500 7.500 0 0 1 1.500 4.500z" fill="#3aa757" /><path d="M8 15.500L11 8l-1-3h5a7.500 7.500 0 0 1-7 10.500z" fill="#fbc116" /><circle cx="8" cy="8" r="3.5" fill="#fff" /><circle cx="8" cy="8" r="2.7" fill="#4688f1" /></Icon> },
  { name: 'Remote desktop', el: <Icon s={16} stroke="none"><path d="M1 1l10 1v8L3 11z" fill="#dfe6ee" /><path d="M2 2l8 1v6l-6 1z" fill="#2838b0" /><path d="M5 12l6-1 1 2-6 1z" fill="#cdd" /><circle cx="12" cy="12" r="3" fill="#e5efe5" /><path d="M10 12h4M12 10v4" stroke="#7aa87a" /></Icon> },
  { name: 'Terminal', open: true, el: <Icon s={16} stroke="#888"><path d="M1 2h14v12H1z" fill="#050505" /><path d="M1 2.500h14" stroke="#ccc" /><path d="M3 6h3M7 8h2" stroke="#ddd" /></Icon> },
  { name: 'Calculator', open: true, el: <Icon s={14} h={16} stroke="none"><path d="M1 1h12v14H1z" fill="#d8e4ec" /><path d="M2 2h10v4H2z" fill="#3c9be0" /><path d="M3 8h2v2H3zM6 8h2v2H6zM3 11h2v2H3zM6 11h2v2H6z" fill="#6b7a88" /><path d="M9 8h3v5H9z" fill="#4a9fd8" /></Icon> },
  { name: 'Mail', open: true, el: <Icon s={18} h={16} stroke="none"><path d="M1 6l8-5 8 5v9H1z" fill="#1479c9" /><path d="M3 5h12v5H3z" fill="#f4f8fb" /><path d="M1 6l8 6 8-6v9H1z" fill="#4bb4ee" /></Icon> },
  { name: 'Charts', open: true, el: <Icon s={14} stroke="none"><path d="M0 0h14v14H0z" fill="#1a1718" /><path d="M2 9h2v3H2z" fill="#e04a3f" /><path d="M4 8h2v3H4z" fill="#f08f30" /><path d="M7 7h2v4H7z" fill="#4688f1" /><path d="M10 5h2v6h-2z" fill="#d34a8a" /></Icon> },
  { name: 'CorelDRAW', open: true, el: <Icon s={17} stroke="#5cb531"><circle cx="8.5" cy="8.5" r="7.5" fill="#0b120b" strokeWidth="1.3" /><path d="M4 4l4 0 5 5-1 4-3-1-5-5z" fill="#f2f2f2" stroke="none" /><path d="M5 5l6 6" stroke="#222" /></Icon> },
  { name: 'Clock', open: true, el: <Icon s={15} stroke="none"><rect width="15" height="15" rx="2" fill="#4ddb7f" /><circle cx="7" cy="9" r="4" fill="#fff" /><path d="M7 6.500V9h2M9 3h3v4" stroke="#1e6b3a" /></Icon> },
  { name: 'LKS', open: true, active: true, el: <Star s={14} color="#ee4650" /> },
];

const trayIcons = [
  ['Show hidden icons', 'M2 8l4-4 4 4'],
  ['Meet now', 'M3 4h5v5H3zM8 6l2-1v4l-2-1M4 2h4M4 11h4'],
  ['OneDrive', 'M2 9c-1-3 1-4 2-3 1-3 5-2 5 1 2 0 2 3 0 3H3z'],
  ['Microphone', 'M5 1h2v5H5zM3 6c0 3 6 3 6 0M6 8v3'],
  ['Network', 'M3 3h8v5H3zM7 8v2M5 10.500h4M1 2v7'],
  ['Volume', 'M1 5h2l2-2v6L3 7H1zM7 4q1 2 0 4M8.500 3q2 3 0 6M10 2q2.500 4 0 8'],
];

const menus = ['Arquivo', 'Editar', 'Ferramentas', 'processo Knit', 'HP2-52C', 'Vista niveis', 'Window', 'ajuda'];

const toolGroups = [
  { w: 122, tools: [['new', 26], ['open', 26], ['save', 26], ['find', 26]] },
  { w: 113, tools: [['cut', 24], ['copy', 24], ['paste', 24], ['brush', 24]] },
  { w: 67, tools: [['undo', 24], ['redo', 24]] },
  { w: 193, tools: [['zoom', 18], ['level'], ['updown', 16], ['slope', 32], ['steps', 12], ['monitor', 38], ['windows', 22], ['bulb', 22]] },
  { w: 130, tools: [['vest', 26], ['yarn', 26], ['menu', 14], ['vestDots', 26], ['preview', 26]] },
];

const palette = [
  'pencil', 'lines', 'select', 'lasso', 'moveBox', 'rotate', 'shapes', 'bucket', 'arrange',
  'blocks', 'stars', 'hand', 'frame', 'text', 'ruler', 'measure', 'shirt', 'layers',
];

const extraIcons = {
  vest: <Vest color="#8a8a8a" />,
  vestDots: <Vest color="#b0b0b0" dots />,
  menu: <Triangle s={9} color="#9cae3c" />,
  text: <LetterIcon>A</LetterIcon>,
};

const iconFor = (name) => icons[name] || extraIcons[name];

const Close = ({ s = 6, w = 1 }) => <Icon s={s} box="0 0 6 6" strokeWidth={w}><path d="M.5 .5l5 5M5.5 .5l-5 5" /></Icon>;

function App() {
  const [tool, setTool] = useState('hand');
  const [color, setColor] = useState(4);

  return (
    <Window>
      <GlobalStyle />
      <TitleBar>
        <Star />
        <Title>LKS - [SemNome1[ Modificar ]]</Title>
        <WindowButtons>
          <button aria-label="Minimize"><Icon s={8}><path d="M1 4.5h6" /></Icon></button>
          <button aria-label="Restore"><Icon s={8}><path d="M.5 2.5h5v5h-5zM2.5 2V.5h5v5H6" /></Icon></button>
          <button aria-label="Close"><Close s={8} w=".8" /></button>
        </WindowButtons>
      </TitleBar>

      <MenuBar>
        <Star s={9} />
        {menus.map((name) => <MenuItem key={name} href="#">{name}</MenuItem>)}
        <ChildButtons>
          <button aria-label="Minimize document"><Icon s={6} stroke="#777"><path d="M1 4.5h4" /></Icon></button>
          <button aria-label="Restore document"><Icon s={6} stroke="#777" strokeWidth=".8"><path d="M1 2.5h3v3H1zM2.5 2V1h3v3H4" /></Icon></button>
          <button aria-label="Close document"><Close s={5} /></button>
        </ChildButtons>
      </MenuBar>

      <ToolBar>
        {toolGroups.map(({ w, tools }) => (
          <ToolGroup key={w} $w={w}>
            <Handle><Close s={4} w="1.5" /></Handle>
            {tools.map(([name, width]) => (name === 'level'
              ? <Picker key={name}><select aria-label="Zoom" defaultValue="26"><option>26</option></select><Triangle s={4} /></Picker>
              : <ToolButton key={name} $w={width} aria-label={name}>{iconFor(name)}</ToolButton>
            ))}
          </ToolGroup>
        ))}
      </ToolBar>

      <Workspace>
        <SideBar>
          <ToolPalette>
            {palette.map((name) => (
              <PaletteTool key={name} aria-label={name} $active={tool === name} onClick={() => setTool(name)}>
                {iconFor(name)}
              </PaletteTool>
            ))}
          </ToolPalette>
        </SideBar>

        <DrawingArea>
          <KnitChart />
          <ScrollBar $vertical><Chevron dir="up" /><ScrollTrack $vertical /><Chevron dir="down" /></ScrollBar>
          <ScrollBar><Chevron dir="left" /><ScrollTrack /><Chevron dir="right" /></ScrollBar>
        </DrawingArea>

        <Panel>
          <PanelTitle>
            <span>Codici</span>
            <button aria-label="Pin"><Icon s={7} strokeWidth=".8"><path d="M2 1h3v3H2zM1 4h5M3.5 4v3" /></Icon></button>
            <button aria-label="Close panel"><Close s={6} w=".6" /></button>
          </PanelTitle>
          {sections.map(({ label, h, cols = 4, codes, more }) => (
            <Section key={label} $h={h}>
              <SectionLabel>{label}</SectionLabel>
              <CodeGrid $cols={cols}>
                {codes.map(({ el, framed, active, dim }, i) => (el
                  ? <Code key={i} $framed={framed} $active={active} $dim={dim} aria-label={typeof el === 'string' ? el : `${label} ${i + 1}`}>{el}</Code>
                  : <span key={i} />
                ))}
                {more && <MoreButton>...</MoreButton>}
              </CodeGrid>
            </Section>
          ))}
          <Section $h={23}>
            <SectionLabel />
            <Free>Livre</Free>
          </Section>
        </Panel>

        <Tabs>
          <Tab $h={29}>Moduli</Tab>
          <Tab $h={65}>Creazioni Guidate</Tab>
          <Tab $h={74}>Colonne Comandi Sx</Tab>
          <Tab $h={75}>Colonne Comandi Dx</Tab>
        </Tabs>
      </Workspace>

      <BottomBar>
        <Box $w={868}>
          <Column $w={10}><Check type="checkbox" defaultChecked aria-label="Codes" /><PageStack /></Column>
          <Column $w={22}><FlatButton $h={14}>C</FlatButton></Column>
          <Column $w={21} $top={5}>
            <CurrentCode><Icon s={14} h={10}><path d="M3 2.5h8M7 4a2 2 0 1 0 .1 0" stroke="#000" strokeWidth="1.5" /></Icon></CurrentCode>
            <span>163</span>
          </Column>
          <Column $w={13} $top={6}>
            <ArrowButton $s={9} aria-label="Previous code"><Triangle dir="up" /></ArrowButton>
            <ArrowButton $s={9} aria-label="Next code"><Triangle /></ArrowButton>
          </Column>
          <Separator />
          <SwatchRow $w={728} $n={codeSwatches.length} $tick>
            {codeSwatches.map(([id, fill, glyph]) => (
              <Swatch key={id}>
                <SwatchColor $color={fill}>
                  {glyph === '?' ? '?' : <Icon s={14} stroke="#101810" strokeWidth=".9">{glyphs[glyph]}</Icon>}
                </SwatchColor>
                {id}
              </Swatch>
            ))}
          </SwatchRow>
          <Arrows>
            <ArrowButton $s={13} aria-label="Scroll codes left"><Triangle dir="left" /></ArrowButton>
            <ArrowButton $s={13} aria-label="Scroll codes right"><Triangle dir="right" /></ArrowButton>
          </Arrows>
        </Box>

        <Box $w={288} $gap={2}>
          <Column $w={12}><Check type="checkbox" defaultChecked aria-label="Colours" /><PageStack first="#fff" second="#ffffa0" /></Column>
          <Column $w={24} $top={5}><CurrentColor /><span>5L</span></Column>
          <Column $w={40} $top={4}>
            <Picker><select aria-label="Technique"><option>-</option></select><Triangle s={6} /></Picker>
            <FlatButton $h={13}>Intarsio...</FlatButton>
          </Column>
          <SwatchRow $w={156} $n={9}>
            {colors.map((fill, i) => (
              <Swatch key={fill} $active={color === i} onClick={() => setColor(i)}>
                <SwatchColor $color={fill} />
                {i}
              </Swatch>
            ))}
          </SwatchRow>
          <Arrows>
            <ArrowButton $s={13} aria-label="Scroll colours left"><Triangle dir="left" /></ArrowButton>
            <ArrowButton $s={13} aria-label="Scroll colours right"><Triangle dir="right" /></ArrowButton>
          </Arrows>
        </Box>

        <Box>
          <Column $w={28}><ArrowButton $s={9} aria-label="More"><Triangle /></ArrowButton></Column>
        </Box>
      </BottomBar>

      <StatusBar>
        <StatusField>Trabalho posterior Links (Com trasporte automatico)</StatusField>
        <StatusField $w={99}>{'<--> X : 163   Y : 12'}</StatusField>
        <StatusField $w={101}>{'Area: X : 207   Y : 217'}</StatusField>
        <StatusField $w={44}>
          <Icon s={11} strokeWidth="1"><path d="M.5 .5h10v10H.5z" /><path d="M2 8.500h7M5.500 3.500a2 2 0 1 0 .1 0" stroke="#000" strokeWidth="1.5" /></Icon>
          164
        </StatusField>
        <StatusField $w={49}><BlackSquare /> - (0)</StatusField>
        <StatusField $w={111} />
      </StatusBar>

      <TaskBar>
        <StartButton aria-label="Start">
          <Icon s={12} stroke="none" fill="#fff"><path d="M0 2l5-1v4.500H0zM6 1l6-1v5.500H6zM0 6.500h5V11l-5-1zM6 6.500h6V12l-6-1z" /></Icon>
        </StartButton>
        <Search>
          <Icon s={12}><circle cx="7" cy="5" r="3.5" /><path d="M4.500 7.500L1 11" /></Icon>
          <input type="text" placeholder="Digite aqui para pesquisar" aria-label="Search" />
        </Search>
        <Apps>
          {apps.map(({ name, el, open, active }) => (
            <AppButton key={name} aria-label={name} $open={open} $active={active}>{el}</AppButton>
          ))}
        </Apps>
        <Tray>
          {trayIcons.map(([name, d]) => (
            <TrayButton key={name} aria-label={name}>
              <Icon s={12} stroke="#e8e8e8" fill={name === 'OneDrive' || name === 'Microphone' ? '#e8e8e8' : 'none'}><path d={d} /></Icon>
            </TrayButton>
          ))}
          <TrayText $w={26}>POR<br />PTB2</TrayText>
          <TrayText $w={44}>17:05<br />20/01/2021</TrayText>
          <TrayButton $w={30} aria-label="Notifications">
            <Icon s={13} fill="#f2f2f2" stroke="none"><path d="M1 1h11v9H7l-3 3v-3H1z" /><path d="M3 4h7M3 6h7M3 8h4" stroke="#213646" /></Icon>
          </TrayButton>
          <ShowDesktop />
        </Tray>
      </TaskBar>
    </Window>
  );
}

export default App;
